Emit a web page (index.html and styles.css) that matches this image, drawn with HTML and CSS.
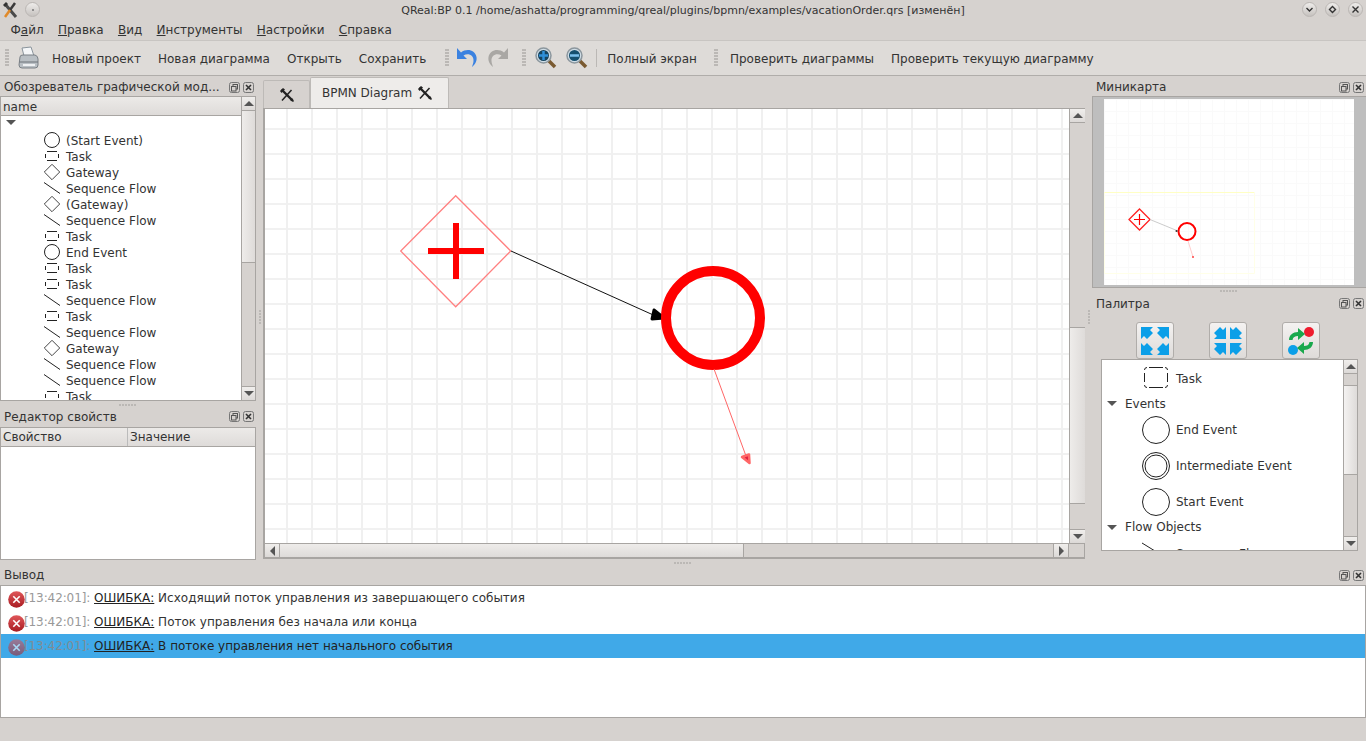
FILE: index.html
```html
<!DOCTYPE html>
<html lang="ru">
<head>
    <meta charset="UTF-8">
    <title>QReal:BP 0.1</title>
    <link rel="stylesheet" href="styles.css">
</head>
<body>
    <svg class="defs" width="0" height="0">
        <defs>
            <linearGradient id="err-fill" x1="0" y1="0" x2="0" y2="1">
                <stop offset="0" stop-color="#e0575a"/>
                <stop offset="1" stop-color="#a81c22"/>
            </linearGradient>
        </defs>
        <symbol id="tools" viewBox="0 0 14 14">
            <path d="M1.500 1.500L12.500 12.500" stroke="#222" stroke-width="2.400"/>
            <path d="M11.500 2L2 12.500" stroke="#222" stroke-width="1.500"/>
            <path d="M0 3L3 0L5 1.500L1.500 5Z" fill="#222"/>
            <path d="M10 12L12 10L14 13L13 14Z" fill="#222"/>
        </symbol>
        <symbol id="ic-circle" viewBox="0 0 16 16">
            <circle cx="8" cy="8" r="7.500" fill="none" stroke="#222"/>
        </symbol>
        <symbol id="ic-task" viewBox="0 0 16 16">
            <path d="M3 3.500H13M3 12.500H13M1.500 6V10M14.500 6V10" fill="none" stroke="#222"/>
        </symbol>
        <symbol id="ic-gateway" viewBox="0 0 16 16">
            <path d="M8 .3L15.700 8L8 15.700L.3 8Z" fill="none" stroke="#444"/>
        </symbol>
        <symbol id="ic-flow" viewBox="0 0 16 16">
            <path d="M0 2.500L16 13.500" stroke="#222" fill="none"/>
        </symbol>
        <symbol id="pal-circle" viewBox="0 0 28 28">
            <circle cx="14" cy="14" r="13.500" fill="none" stroke="#222"/>
        </symbol>
        <symbol id="pal-task" viewBox="0 0 24 21">
            <path d="M5 .5H19M5 20.500H19M.5 6V15M23.500 6V15M.5 3Q.5 .5 3 .5M23.500 3Q23.500 .5 21 .5M.5 18Q.5 20.500 3 20.500M23.500 18Q23.500 20.500 21 20.500" fill="none" stroke="#222"/>
        </symbol>
        <symbol id="float" viewBox="0 0 11 11">
            <rect x=".5" y=".5" width="10" height="10" rx="2" fill="none" stroke="#777"/>
            <rect x="4" y="2.500" width="4.500" height="4.500" fill="none" stroke="#555"/>
            <rect x="2.500" y="4.500" width="4.500" height="4.500" fill="#d6d2cf" stroke="#555"/>
        </symbol>
        <symbol id="close" viewBox="0 0 11 11">
            <rect x=".5" y=".5" width="10" height="10" rx="2" fill="none" stroke="#777"/>
            <path d="M3 3L8 8M8 3L3 8" stroke="#333" stroke-width="1.600"/>
        </symbol>
        <symbol id="err" viewBox="0 0 17 17">
            <circle cx="8.500" cy="8.500" r="8.300" fill="url(#err-fill)"/>
            <path d="M5.300 5.300L11.700 11.700M11.700 5.300L5.300 11.700" stroke="#fff" stroke-width="1.600"/>
        </symbol>
    </svg>

    <header class="titlebar">
        <div class="title-left">
            <svg class="logo" width="16" height="16" viewBox="0 0 16 16">
                <path d="M3 2L14 15" stroke="#4a4a4a" stroke-width="3"/>
                <path d="M13 1L8 8" stroke="#3a3a3a" stroke-width="2.500"/>
                <path d="M8 8L3 15" stroke="#e08a2a" stroke-width="2.500"/>
                <path d="M1 3L4 0L6 2L3 5Z" fill="#333"/>
            </svg>
            <span class="win-btn"><i class="dot"></i></span>
        </div>
        <div class="title-text">QReal:BP 0.1 /home/ashatta/programming/qreal/plugins/bpmn/examples/vacationOrder.qrs [изменён]</div>
        <div class="title-right">
            <span class="win-btn"><svg width="9" height="9" viewBox="0 0 9 9"><path d="M1.500 3L4.500 6L7.500 3" fill="none" stroke="#333" stroke-width="1.400"/></svg></span>
            <span class="win-btn"><svg width="9" height="9" viewBox="0 0 9 9"><path d="M4.500 1.500L7.500 4.500L4.500 7.500L1.500 4.500Z" fill="none" stroke="#333" stroke-width="1.400"/></svg></span>
            <span class="win-btn"><svg width="9" height="9" viewBox="0 0 9 9"><path d="M1.500 1.500L7.500 7.500M7.500 1.500L1.500 7.500" fill="none" stroke="#333" stroke-width="1.400"/></svg></span>
        </div>
    </header>

    <nav class="menubar">
        <span>Ф<u>а</u>йл</span>
        <span><u>П</u>равка</span>
        <span><u>В</u>ид</span>
        <span><u>И</u>нструменты</span>
        <span><u>Н</u>астройки</span>
        <span><u>С</u>правка</span>
    </nav>

    <div class="toolbar">
        <i class="grip"></i>
        <svg class="printer" width="24" height="24" viewBox="0 0 24 24">
            <path d="M6 2L15 1L18 10H8Z" fill="#f4f6f8" stroke="#8a949c"/>
            <path d="M4 11Q4 9 7 9H19Q22 10 22 13V19Q22 22 19 22H6Q3 22 3 19Z" fill="#b9bfc4" stroke="#7a8086"/>
            <path d="M3.500 16H22" stroke="#6d7378"/>
            <path d="M7 19H19" stroke="#eef0f2" stroke-width="2"/>
        </svg>
        <span class="tool first">Новый проект</span>
        <span class="tool">Новая диаграмма</span>
        <span class="tool">Открыть</span>
        <span class="tool">Сохранить</span>
        <i class="grip g2"></i>
        <svg class="undo" width="24" height="24" viewBox="0 0 24 24">
            <path d="M3 2V13H13L9.500 9.500C14 6.500 20 9 19.500 15C19.500 17 18.500 19 18 21C22 18 23 14 22.500 11C21 4 13 2 7 6.500Z" fill="#3b82e0"/>
        </svg>
        <svg class="redo" width="24" height="24" viewBox="0 0 24 24">
            <path d="M22 2V13H12L15.500 9.500C11 6.500 5 9 5.500 15C5.500 17 6.500 19 7 21C3 18 2 14 2.500 11C4 4 12 2 18 6.500Z" fill="#a9a7a4"/>
        </svg>
        <i class="grip g3"></i>
        <svg class="zoom-in" width="22" height="22" viewBox="0 0 22 22">
            <path d="M13 13L20 20" stroke="#7a5a30" stroke-width="3.500"/>
            <circle cx="8.500" cy="8.500" r="7.500" fill="#cfdde6" stroke="#8c979e" stroke-width="1.500"/>
            <circle cx="8.500" cy="8.500" r="5.500" fill="#16445f"/>
            <path d="M4 8.500H13M8.500 4V13" stroke="#2f8fd8" stroke-width="2.500"/>
        </svg>
        <svg class="zoom-out" width="22" height="22" viewBox="0 0 22 22">
            <path d="M13 13L20 20" stroke="#7a5a30" stroke-width="3.500"/>
            <circle cx="8.500" cy="8.500" r="7.500" fill="#cfdde6" stroke="#8c979e" stroke-width="1.500"/>
            <circle cx="8.500" cy="8.500" r="5.500" fill="#16506f"/>
            <path d="M4 8.500H13" stroke="#7cc0ec" stroke-width="2.500"/>
        </svg>
        <i class="sep"></i>
        <span class="tool full">Полный экран</span>
        <i class="grip g4"></i>
        <span class="tool check">Проверить диаграммы</span>
        <span class="tool">Проверить текущую диаграмму</span>
    </div>

    <main class="workspace">
        <aside class="left-col">
            <section class="dock explorer">
                <div class="dock-title top-title">
                    <span>Обозреватель графической мод...</span>
                    <div class="dock-btns"><svg><use href="#float"/></svg><svg><use href="#close"/></svg></div>
                </div>
                <div class="frame tree-frame">
                    <div class="tree-body">
                        <div class="head-row">name</div>
                        <div class="tree-rows">
                            <div class="t-row"><i class="arrow-down root"></i></div>
                            <div class="t-row"><svg class="ti"><use href="#ic-circle"/></svg>(Start Event)</div>
                            <div class="t-row"><svg class="ti"><use href="#ic-task"/></svg>Task</div>
                            <div class="t-row"><svg class="ti"><use href="#ic-gateway"/></svg>Gateway</div>
                            <div class="t-row"><svg class="ti"><use href="#ic-flow"/></svg>Sequence Flow</div>
                            <div class="t-row"><svg class="ti"><use href="#ic-gateway"/></svg>(Gateway)</div>
                            <div class="t-row"><svg class="ti"><use href="#ic-flow"/></svg>Sequence Flow</div>
                            <div class="t-row"><svg class="ti"><use href="#ic-task"/></svg>Task</div>
                            <div class="t-row"><svg class="ti"><use href="#ic-circle"/></svg>End Event</div>
                            <div class="t-row"><svg class="ti"><use href="#ic-task"/></svg>Task</div>
                            <div class="t-row"><svg class="ti"><use href="#ic-task"/></svg>Task</div>
                            <div class="t-row"><svg class="ti"><use href="#ic-flow"/></svg>Sequence Flow</div>
                            <div class="t-row"><svg class="ti"><use href="#ic-task"/></svg>Task</div>
                            <div class="t-row"><svg class="ti"><use href="#ic-flow"/></svg>Sequence Flow</div>
                            <div class="t-row"><svg class="ti"><use href="#ic-gateway"/></svg>Gateway</div>
                            <div class="t-row"><svg class="ti"><use href="#ic-flow"/></svg>Sequence Flow</div>
                            <div class="t-row"><svg class="ti"><use href="#ic-flow"/></svg>Sequence Flow</div>
                            <div class="t-row"><svg class="ti"><use href="#ic-task"/></svg>Task</div>
                        </div>
                    </div>
                    <div class="vscroll">
                        <b class="sb-btn"><i class="arrow-up"></i></b>
                        <div class="trough"><div class="thumb tree-thumb"></div></div>
                        <b class="sb-btn"><i class="arrow-down"></i></b>
                    </div>
                </div>
            </section>
            <div class="hsplit"></div>
            <section class="dock props">
                <div class="dock-title">
                    <span>Редактор свойств</span>
                    <div class="dock-btns"><svg><use href="#float"/></svg><svg><use href="#close"/></svg></div>
                </div>
                <div class="frame props-frame">
                    <div class="prop-head"><span>Свойство</span><span>Значение</span></div>
                </div>
            </section>
        </aside>
        <div class="vsplit"><i class="vgrip"></i></div>
        <section class="center">
            <div class="tabs">
                <div class="tab tab-off"><svg width="14" height="14"><use href="#tools"/></svg></div>
                <div class="tab tab-on">BPMN Diagram<svg width="14" height="14"><use href="#tools"/></svg></div>
            </div>
            <div class="pane">
                <div class="canvas-row">
                    <div class="canvas">
                        <svg class="diagram" width="804" height="434" viewBox="265 109 804 434">
                            <path d="M455.700 195.700L510.700 251L455.700 306.700L400.700 251Z" fill="none" stroke="#ff8080" stroke-width="1.300"/>
                            <path d="M456 223V279M428 251H484" stroke="#f00" stroke-width="6"/>
                            <path d="M511 251L660 318" stroke="#111" stroke-width="1"/>
                            <path d="M654 310L664 318L652 319Z" fill="#000" stroke="#000" stroke-width="3" stroke-linejoin="round"/>
                            <circle cx="713" cy="318" r="47" fill="none" stroke="#f00" stroke-width="10"/>
                            <path d="M714 369L746 456" stroke="#f66" stroke-width="1"/>
                            <path d="M742 457L749 454.500L749.500 463Z" fill="#e02040" stroke="#f66" stroke-width="2.500" stroke-linejoin="round"/>
                        </svg>
                    </div>
                    <div class="vscroll wide">
                        <b class="sb-btn"><i class="arrow-up"></i></b>
                        <div class="trough"><div class="canvas-before"></div><div class="thumb canvas-thumb"></div></div>
                        <b class="sb-btn"><i class="arrow-down"></i></b>
                    </div>
                </div>
                <div class="hscroll">
                    <b class="sb-btn"><i class="arrow-left"></i></b>
                    <div class="htrough"><div class="hthumb"></div></div>
                    <b class="sb-btn"><i class="arrow-right"></i></b>
                    <b class="corner"></b>
                </div>
            </div>
        </section>
        <div class="vsplit"><i class="vgrip"></i></div>
        <aside class="right-col">
            <section class="dock minimap">
                <div class="dock-title top-title">
                    <span>Миникарта</span>
                    <div class="dock-btns"><svg><use href="#float"/></svg><svg><use href="#close"/></svg></div>
                </div>
                <div class="mini-frame">
                    <div class="mini-page">
                        <svg width="250" height="186" viewBox="1104 99 250 186">
                            <path d="M1104 192.500H1254.500" stroke="#ffffc4"/>
                            <path d="M1104.500 192.500V273.500H1254.500V192.500" fill="none" stroke="#ffffe8"/>
                            <path d="M1139.500 209L1150 219.500L1139.500 230L1129 219.500Z" fill="#fff" stroke="#f22" stroke-width="1.300"/>
                            <path d="M1139.500 214V225M1134 219.500H1145" stroke="#f00" stroke-width="1.200"/>
                            <path d="M1150 219.500L1178 231" stroke="#ccc"/>
                            <circle cx="1187" cy="231.500" r="8.500" fill="none" stroke="#f00" stroke-width="2"/>
                            <path d="M1188 241L1193 257" stroke="#fcc"/>
                            <circle cx="1193" cy="257" r="1" fill="#f44"/>
                            <circle cx="1176.500" cy="231" r="1" fill="#333"/>
                        </svg>
                    </div>
                </div>
            </section>
            <div class="hsplit"></div>
            <section class="dock palette">
                <div class="dock-title">
                    <span>Палитра</span>
                    <div class="dock-btns"><svg><use href="#float"/></svg><svg><use href="#close"/></svg></div>
                </div>
                <div class="pal-btns">
                    <button class="pal-btn">
                        <svg width="30" height="30" viewBox="0 0 30 30" fill="#0b9fe8">
                            <path d="M1 1H13L10 4L13 7L7 13L4 10L1 13Z"/>
                            <path d="M29 1H17L20 4L17 7L23 13L26 10L29 13Z"/>
                            <path d="M1 29H13L10 26L13 23L7 17L4 20L1 17Z"/>
                            <path d="M29 29H17L20 26L17 23L23 17L26 20L29 17Z"/>
                        </svg>
                    </button>
                    <button class="pal-btn">
                        <svg width="30" height="30" viewBox="0 0 30 30" fill="#0b9fe8">
                            <path d="M13 13H1L4 10L1 7L7 1L10 4L13 1Z"/>
                            <path d="M17 13H29L26 10L29 7L23 1L20 4L17 1Z"/>
                            <path d="M13 17H1L4 20L1 23L7 29L10 26L13 29Z"/>
                            <path d="M17 17H29L26 20L29 23L23 29L20 26L17 29Z"/>
                        </svg>
                    </button>
                    <button class="pal-btn">
                        <svg width="30" height="30" viewBox="0 0 30 30">
                            <circle cx="23" cy="6" r="5" fill="#ee1c2e"/>
                            <circle cx="7" cy="24" r="5" fill="#0b9fe8"/>
                            <path d="M3 14C3 9 7 6 12 6V2L19 8L12 14V10C9 10 7 11 6.500 14Z" fill="#19a84c"/>
                            <path d="M27 16C27 21 23 24 18 24V28L11 22L18 16V20C21 20 23 19 23.500 16Z" fill="#19a84c"/>
                        </svg>
                    </button>
                </div>
                <div class="frame pal-frame">
                    <div class="pal-list">
                        <div class="p-item task-item"><svg class="pal-task"><use href="#pal-task"/></svg>Task</div>
                        <div class="p-group events"><i class="arrow-down"></i>Events</div>
                        <div class="p-item"><svg class="pi"><use href="#pal-circle"/></svg>End Event</div>
                        <div class="p-item">
                            <svg class="pi" viewBox="0 0 28 28"><circle cx="14" cy="14" r="13.500" fill="none" stroke="#222"/><circle cx="14" cy="14" r="11" fill="none" stroke="#222"/></svg>Intermediate Event
                        </div>
                        <div class="p-item"><svg class="pi"><use href="#pal-circle"/></svg>Start Event</div>
                        <div class="p-group objects"><i class="arrow-down"></i>Flow Objects</div>
                        <div class="p-item last-item"><svg class="pi" viewBox="0 0 28 28"><path d="M0 3L13 11" stroke="#222" fill="none"/></svg>Sequence Flow</div>
                    </div>
                    <div class="vscroll">
                        <b class="sb-btn"><i class="arrow-up"></i></b>
                        <div class="trough"><div class="pal-before"></div><div class="thumb pal-thumb"></div></div>
                        <b class="sb-btn"><i class="arrow-down"></i></b>
                    </div>
                </div>
            </section>
        </aside>
    </main>

    <div class="hsplit main-split"></div>

    <section class="output">
        <div class="dock-title">
            <span>Вывод</span>
            <div class="dock-btns"><svg><use href="#float"/></svg><svg><use href="#close"/></svg></div>
        </div>
        <div class="frame out-list">
            <div class="out-row"><svg class="err"><use href="#err"/></svg><span class="out-text"><span class="time">[13:42:01]:</span> <u>ОШИБКА:</u> Исходящий поток управления из завершающего события</span></div>
            <div class="out-row"><svg class="err"><use href="#err"/></svg><span class="out-text"><span class="time">[13:42:01]:</span> <u>ОШИБКА:</u> Поток управления без начала или конца</span></div>
            <div class="out-row selected"><svg class="err"><use href="#err"/></svg><span class="out-text"><span class="time">[13:42:01]:</span> <u>ОШИБКА:</u> В потоке управления нет начального события</span></div>
        </div>
    </section>
</body>
</html>
```
FILE: styles.css
```css
* {
    box-sizing: border-box;
}

html, body {
    margin: 0;
    height: 741px;
    overflow: hidden;
}

body {
    background-color: #d6d2cf;
    color: #333;
    font-family: "DejaVu Sans", sans-serif;
    font-size: 12px;
    display: flex;
    flex-direction: column;
}

.defs {
    position: absolute;
}

.titlebar {
    height: 19px;
    display: flex;
    align-items: center;
    justify-content: space-between;
    padding: 0 3px 0 2px;
}

.title-left, .title-right {
    display: flex;
    align-items: center;
}

.title-left {
    gap: 7px;
}

.title-right {
    gap: 8px;
}

.title-text {
    flex: 1;
    text-align: center;
    font-size: 11px;
    padding: 1px 0 0 24px;
}

.win-btn {
    width: 15px;
    height: 15px;
    border-radius: 50%;
    background: linear-gradient(#eeecea, #c6c2bf);
    border: 1px solid #bab6b3;
    display: flex;
    align-items: center;
    justify-content: center;
}

.dot {
    width: 2px;
    height: 2px;
    background: #777;
    border-radius: 50%;
}

.menubar {
    height: 21px;
    display: flex;
    align-items: center;
    gap: 14.3px;
    padding-left: 10.5px;
}

.toolbar {
    height: 36px;
    display: flex;
    align-items: center;
    background-color: #dedbd8;
    border-top: 1px solid #c8c5c2;
    border-bottom: 1px solid #b0adaa;
}

.grip {
    width: 4px;
    height: 18px;
    margin-left: 5px;
    background-image: radial-gradient(circle at 1px 1px, #bbb8b5 1px, transparent 1px);
    background-size: 2px 3px;
}

.printer {
    margin-left: 7px;
}

.tool {
    margin-left: 17px;
    margin-top: 2px;
    white-space: nowrap;
}

.tool.first {
    margin-left: 12px;
}

.g2 {
    margin-left: 19px;
}

.undo {
    margin-left: 5px;
}

.redo {
    margin-left: 8px;
}

.g3 {
    margin-left: 12px;
}

.zoom-in {
    margin-left: 9px;
}

.zoom-out {
    margin-left: 9px;
}

.sep {
    width: 1px;
    height: 18px;
    background: #bbb8b5;
    margin-left: 8px;
}

.tool.full {
    margin-left: 10px;
}

.g4 {
    margin-left: 17px;
}

.tool.check {
    margin-left: 12px;
}

.workspace {
    height: 483px;
    display: flex;
}

.left-col {
    width: 256px;
    display: flex;
    flex-direction: column;
}

.right-col {
    width: 274px;
    display: flex;
    flex-direction: column;
}

.center {
    width: 822px;
    display: flex;
    flex-direction: column;
}

.vsplit {
    width: 7px;
    display: flex;
    align-items: center;
    justify-content: center;
}

.vgrip {
    width: 2px;
    height: 15px;
    background-image: radial-gradient(circle at 1px 1px, #bbb8b5 1px, transparent 1px);
    background-size: 2px 3px;
}

.hsplit {
    height: 7px;
    flex: none;
    display: flex;
    align-items: center;
    justify-content: center;
}

.hsplit::after {
    content: "";
    width: 18px;
    height: 2px;
    background-image: radial-gradient(circle at 1px 1px, #bbb8b5 1px, transparent 1px);
    background-size: 3px 2px;
}

.dock {
    display: flex;
    flex-direction: column;
}

.dock-title {
    height: 19px;
    padding: 0 2px 2px 4px;
    display: flex;
    align-items: center;
    justify-content: space-between;
    flex: none;
}

.dock-title.top-title {
    height: 20px;
    padding: 2px 2px 0 4px;
}

.palette .dock-title {
    padding-bottom: 0;
}

.output .dock-title {
    padding-bottom: 1px;
}

.dock-btns {
    display: flex;
    gap: 3px;
}

.dock-btns svg {
    width: 11px;
    height: 11px;
    display: block;
}

.frame {
    border: 1px solid #a8a5a2;
    background: #fff;
}

.explorer {
    height: 325px;
}

.tree-frame {
    flex: 1;
    display: flex;
    overflow: hidden;
    min-height: 0;
}

.tree-body {
    flex: 1;
    overflow: hidden;
    min-width: 0;
}

.head-row {
    height: 19px;
    line-height: 21px;
    padding-left: 2px;
    background: linear-gradient(#eceae8, #dedbd9);
    border-bottom: 1px solid #a8a5a2;
}

.tree-rows {
    padding-top: 1px;
}

.t-row {
    height: 16px;
    display: flex;
    align-items: center;
    padding-left: 43px;
    position: relative;
    white-space: nowrap;
}

.ti {
    width: 16px;
    height: 16px;
    margin: -2px 6px 0 0;
    flex: none;
}

.arrow-down, .arrow-up, .arrow-left, .arrow-right {
    display: block;
    width: 0;
    height: 0;
    border-style: solid;
    border-color: transparent;
}

.arrow-down {
    border-width: 5px 5px 0;
    border-top-color: #555;
}

.arrow-up {
    border-width: 0 5px 5px;
    border-bottom-color: #555;
}

.arrow-left {
    border-width: 5px 5px 5px 0;
    border-right-color: #555;
}

.arrow-right {
    border-width: 5px 0 5px 5px;
    border-left-color: #555;
}

.root {
    position: absolute;
    left: 5px;
    top: 3px;
}

.vscroll {
    width: 14px;
    flex: none;
    display: flex;
    flex-direction: column;
    background: #d6d2cf;
    border-left: 1px solid #a8a5a2;
}

.vscroll.wide {
    width: 16px;
}

.sb-btn {
    height: 13px;
    flex: none;
    display: flex;
    align-items: center;
    justify-content: center;
    background: linear-gradient(#f0eeec, #dcd9d7);
}

.trough {
    flex: 1;
    border-top: 1px solid #a8a5a2;
    border-bottom: 1px solid #a8a5a2;
    display: flex;
    flex-direction: column;
}

.thumb {
    background: linear-gradient(90deg, #eeecea, #dedbd9);
    border-bottom: 1px solid #a8a5a2;
}

.tree-thumb {
    height: 152px;
}

.props {
    flex: 1;
}

.props-frame {
    height: 133px;
}

.prop-head {
    height: 19px;
    display: flex;
    background: linear-gradient(#eceae8, #dedbd9);
    border-bottom: 1px solid #a8a5a2;
    line-height: 18px;
}

.prop-head span {
    padding-left: 2px;
}

.prop-head span:first-child {
    width: 127px;
    border-right: 1px solid #bbb;
}

.tabs {
    height: 31px;
    margin-top: 1px;
    display: flex;
    align-items: flex-end;
    flex: none;
}

.tab {
    display: flex;
    align-items: center;
    border: 1px solid #bdbab7;
    border-bottom: none;
    border-radius: 2px 2px 0 0;
}

.tab-off {
    height: 28px;
    width: 47px;
    justify-content: center;
    background: #d6d2cf;
}

.tab-on {
    height: 31px;
    width: 139px;
    background: #eeecea;
    padding-left: 11px;
    gap: 6px;
}

.pane {
    height: 451px;
    border: 1px solid #a8a5a2;
    border-left-width: 2px;
    border-bottom-width: 2px;
    display: flex;
    flex-direction: column;
    background: #d6d2cf;
}

.canvas-row {
    flex: 1;
    display: flex;
    min-height: 0;
}

.canvas {
    flex: 1;
    position: relative;
    background-color: #fff;
    background-image:
        linear-gradient(90deg, #f0f0f0 2px, transparent 2px),
        linear-gradient(#f1f1f1 2px, transparent 2px);
    background-size: 25px 25px;
    background-position: -4px -6px;
}

.diagram {
    display: block;
}

.canvas-before {
    height: 204px;
}

.canvas-thumb {
    height: 177px;
    border-top: 1px solid #a8a5a2;
}

.hscroll {
    height: 14px;
    flex: none;
    display: flex;
    border-top: 1px solid #a8a5a2;
}

.hscroll .sb-btn {
    width: 14px;
    height: auto;
}

.htrough {
    flex: 1;
    border-left: 1px solid #a8a5a2;
    border-right: 1px solid #a8a5a2;
}

.hthumb {
    width: 464px;
    height: 100%;
    background: linear-gradient(#eeecea, #dedbd9);
    border-right: 1px solid #a8a5a2;
}

.corner {
    width: 16px;
    border-left: 1px solid #a8a5a2;
}

.minimap {
    height: 211px;
}

.mini-frame {
    flex: 1;
    background: #bebebe;
    border: 1px solid #a8a5a2;
    border-right: none;
    padding: 2px 11px;
}

.mini-page {
    width: 250px;
    height: 186px;
    background-color: #fff;
    background-image:
        linear-gradient(90deg, #fafafa 1px, transparent 1px),
        linear-gradient(#fafafa 1px, transparent 1px);
    background-size: 12px 12px;
}

.mini-page svg {
    display: block;
}

.palette {
    flex: 1;
    min-height: 0;
}

.pal-btns {
    display: flex;
    gap: 35px;
    padding: 9px 0 0 44px;
    height: 46px;
    flex: none;
}

.pal-btn {
    width: 38px;
    height: 37px;
    padding: 0;
    border: 1px solid #b0adaa;
    border-radius: 3px;
    background: linear-gradient(#f4f2f1, #dedbd9);
    display: flex;
    align-items: center;
    justify-content: center;
}

.pal-frame {
    width: 257px;
    height: 192px;
    margin-left: 9px;
    display: flex;
    overflow: hidden;
}

.pal-list {
    flex: 1;
    overflow: hidden;
    padding-top: 1px;
}

.p-item {
    height: 36px;
    display: flex;
    align-items: center;
    padding-left: 40px;
    white-space: nowrap;
}

.last-item {
    margin-top: 2px;
}

.task-item {
    height: 33px;
    padding: 2px 0 0 42px;
}

.pal-task {
    width: 24px;
    height: 21px;
    margin: -3px 8px 0 0;
    flex: none;
}

.pi {
    width: 28px;
    height: 28px;
    margin-right: 6px;
    flex: none;
}

.p-group {
    display: flex;
    align-items: center;
    gap: 8px;
    padding-left: 5px;
}

.events {
    height: 18px;
    padding-top: 1px;
}

.objects {
    height: 14px;
}

.pal-before {
    height: 12px;
    border-bottom: 1px solid #a8a5a2;
}

.pal-thumb {
    height: 89px;
    background: linear-gradient(90deg, #f4f2f1, #dedbd9);
}

.main-split {
    height: 7px;
}

.output {
    height: 152px;
    flex: none;
    display: flex;
    flex-direction: column;
}

.out-list {
    flex: 1;
}

.out-row {
    height: 24px;
    display: flex;
    align-items: center;
    padding-left: 7px;
    white-space: pre;
}

.out-text {
    margin-left: -1px;
}

.out-row u {
    color: #222;
}

.err {
    width: 17px;
    height: 17px;
    flex: none;
    margin-top: 3px;
}

.time {
    color: #999;
    letter-spacing: -0.1px;
}

.selected {
    background: #40a9e8;
    color: #222;
}

.selected .err {
    opacity: 0.55;
}

.selected .time {
    color: #7f8c94;
}
```
